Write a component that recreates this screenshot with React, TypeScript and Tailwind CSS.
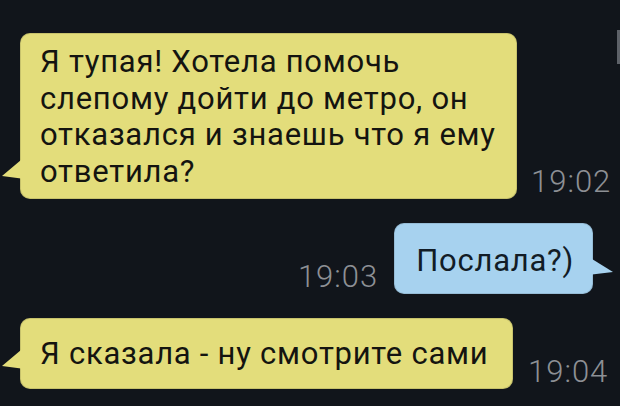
export default function App() {
  return (
    <div className="relative w-[620px] h-[406px] overflow-hidden bg-[#11151b] font-['Roboto',sans-serif]">
      {/* date header, cut off at top */}
      <div className="h-[33px] flex justify-center">
        <span className="-mt-[24px] text-[28px] leading-[30px] text-[#9a9da2] tracking-[2px]">
          09.08.2016 г.
        </span>
      </div>

      {/* incoming 1 */}
      <div className="flex items-end">
        <div className="relative ml-[20px] w-[497px] rounded-[10px] bg-[#e3dd7b] pl-[20px] pt-[11px] pb-[8px] text-[31px] leading-[36.7px] tracking-[0.75px] text-[#141410] shadow-[inset_0_0_0_1px_rgba(0,0,0,0.12)]">
          <div className="whitespace-nowrap">Я тупая! Хотела помочь</div>
          <div className="whitespace-nowrap">слепому дойти до метро, он</div>
          <div className="whitespace-nowrap">отказался и знаешь что я ему</div>
          <div className="whitespace-nowrap">ответила?</div>
          <svg className="absolute -left-[19px] bottom-[20px]" width="20" height="19" viewBox="0 0 20 19">
            <path d="M20 0 L1 16 L20 18.5 Z" fill="#e3dd7b" />
          </svg>
        </div>
        <span className="ml-[14px] text-[31px] leading-[34px] font-light tracking-[1px] text-[#8d9095]">19:02</span>
      </div>

      {/* outgoing */}
      <div className="mt-[24px] flex items-end justify-end pr-[27px]">
        <span className="mr-[16px] text-[31px] leading-[34px] font-light tracking-[1px] text-[#8d9095]">19:03</span>
        <div className="relative h-[71px] rounded-[10px] bg-[#a7d2ef] pl-[22px] pr-[19px] pt-[20px] text-[31px] leading-[36.7px] tracking-[0.75px] text-[#121c26] shadow-[inset_0_0_0_1px_rgba(0,0,0,0.1)]">
          <span className="whitespace-nowrap">Послала?)</span>
          <svg className="absolute -right-[21px] bottom-[19px]" width="22" height="16" viewBox="0 0 22 16">
            <path d="M0 0 L21 13 L0 15.5 Z" fill="#a7d2ef" />
          </svg>
        </div>
      </div>

      {/* incoming 2 */}
      <div className="mt-[24px] flex items-end">
        <div className="relative ml-[20px] w-[493px] h-[71px] rounded-[10px] bg-[#e3dd7b] pl-[20px] pt-[18px] text-[31px] leading-[36.7px] tracking-[0.75px] text-[#141410] shadow-[inset_0_0_0_1px_rgba(0,0,0,0.12)]">
          <span className="whitespace-nowrap">Я сказала - ну смотрите сами</span>
          <svg className="absolute -left-[19px] bottom-[20px]" width="20" height="19" viewBox="0 0 20 19">
            <path d="M20 0 L1 16 L20 18.5 Z" fill="#e3dd7b" />
          </svg>
        </div>
        <span className="ml-[15px] text-[31px] leading-[34px] font-light tracking-[1px] text-[#8d9095]">19:04</span>
      </div>

      {/* scrollbar */}
      <div className="absolute right-0 top-[30px] h-[34px] w-[3px] bg-[#5d6168]" />
    </div>
  );
}
